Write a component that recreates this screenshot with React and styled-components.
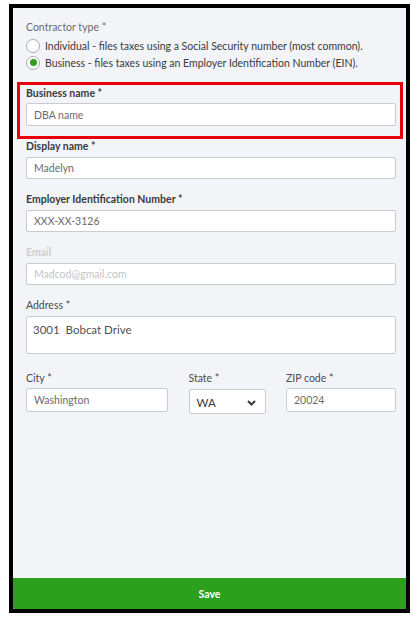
import React from "react";
import styled, { createGlobalStyle } from "styled-components";

const GlobalStyle = createGlobalStyle`
  html, body { margin: 0; padding: 0; background: #ffffff; }
  body { font-family: Lato, "Liberation Sans", Arial, sans-serif; }
  * { box-sizing: border-box; }
`;

const Frame = styled.div`
  margin: 4px 0 0 9px;
  width: 401px;
  height: 609px;
  border: 4px solid #000;
  background: #f3f4f8;
  display: flex;
  flex-direction: column;
`;

const Content = styled.div`
  flex: 1;
  padding: 12px 10px 0 13px;
  display: flex;
  flex-direction: column;
  border-bottom: 1px solid #fbfbfd;
`;

const GroupLabel = styled.div`
  font-size: 10.5px;
  line-height: 14px;
  color: #6b6c72;
  margin-bottom: 3px;
`;

const RadioGroup = styled.div`
  display: flex;
  flex-direction: column;
  margin-bottom: 11px;
`;

const RadioRow = styled.label`
  display: flex;
  align-items: center;
  gap: 5px;
  height: 17px;
  font-size: 10.5px;
  color: #393a3d;
`;

const RadioCircle = styled.span`
  width: 14px;
  height: 14px;
  border-radius: 50%;
  border: 1px solid #a9abb0;
  background: #fff;
  display: flex;
  align-items: center;
  justify-content: center;
  flex-shrink: 0;
  &::after {
    content: "";
    width: 7px;
    height: 7px;
    border-radius: 50%;
    background: ${(p) => (p.$checked ? "#2ca01c" : "transparent")};
  }
`;

const Field = styled.div`
  display: flex;
  flex-direction: column;
  margin-bottom: ${(p) => p.$gap ?? 13}px;
  min-width: 0;
`;

const HighlightField = styled(Field)`
  margin: 0 -7px 0 -9px;
  padding: 1px 4px 10px 6px;
  border: 3px solid #e8000b;
`;

const Label = styled.div`
  font-size: 10.5px;
  line-height: 14px;
  font-weight: ${(p) => (p.$strong ? 700 : 400)};
  color: ${(p) => (p.$muted ? "#cdced2" : p.$strong ? "#393a3d" : "#4a4b50")};
  margin-bottom: ${(p) => p.$space ?? 4}px;
  white-space: nowrap;
`;

const TextInput = styled.input`
  display: block;
  width: 100%;
  height: ${(p) => p.$h ?? 22}px;
  border: 1px solid #c9cbcf;
  border-radius: 2px;
  background: #fff;
  padding: 0 7px;
  font-family: inherit;
  font-size: 10.5px;
  color: ${(p) => (p.$muted ? "#c3c4c8" : "#6b6c72")};
  outline: none;
`;

const TextArea = styled.textarea`
  display: block;
  width: 100%;
  height: 38px;
  border: 1px solid #c9cbcf;
  border-radius: 2px;
  background: #fff;
  padding: 5px 6px;
  font-family: inherit;
  font-size: 11.5px;
  line-height: 15px;
  color: #4f5055;
  resize: none;
  outline: none;
`;

const AddressRow = styled.div`
  display: grid;
  grid-template-columns: 142px 77px 110px;
  column-gap: 20px;
  justify-content: space-between;
  align-items: start;
`;

const SelectBox = styled.div`
  height: 25px;
  margin-top: 1px;
  border: 1px solid #c9cbcf;
  border-radius: 2px;
  background: #fff;
  display: flex;
  align-items: center;
  justify-content: space-between;
  padding: 2px 9px 0 7px;
  font-size: 11.5px;
  color: #393a3d;
`;

const SaveBar = styled.button`
  height: 31px;
  border: none;
  background: #2ca01c;
  color: #fff;
  font-family: inherit;
  font-weight: 700;
  font-size: 10.5px;
  display: flex;
  align-items: center;
  justify-content: center;
  padding: 0;
  cursor: pointer;
`;

const Chevron = () => (
  <svg width="9" height="6" viewBox="0 0 9 6" aria-hidden="true">
    <polyline points="1,1 4.5,4.5 8,1" fill="none" stroke="#393a3d" strokeWidth="2" />
  </svg>
);

export default function App() {
  return (
    <>
      <GlobalStyle />
      <Frame>
        <Content>
          <GroupLabel>Contractor type *</GroupLabel>
          <RadioGroup>
            <RadioRow>
              <RadioCircle />
              Individual - files taxes using a Social Security number (most common).
            </RadioRow>
            <RadioRow>
              <RadioCircle $checked />
              Business - files taxes using an Employer Identification Number (EIN).
            </RadioRow>
          </RadioGroup>

          <HighlightField>
            <Label $strong $space={3}>Business name *</Label>
            <TextInput readOnly defaultValue="DBA name" $h={23} />
          </HighlightField>

          <Field>
            <Label $strong>Display name *</Label>
            <TextInput readOnly defaultValue="Madelyn" />
          </Field>

          <Field>
            <Label $strong>Employer Identification Number *</Label>
            <TextInput readOnly defaultValue="XXX-XX-3126" />
          </Field>

          <Field>
            <Label $strong $muted>Email</Label>
            <TextInput readOnly defaultValue="Madcod@gmail.com" $muted />
          </Field>

          <Field $gap={17}>
            <Label>Address *</Label>
            <TextArea readOnly defaultValue="3001  Bobcat Drive" />
          </Field>

          <AddressRow>
            <Field $gap={0}>
              <Label $space={3}>City *</Label>
              <TextInput readOnly defaultValue="Washington" $h={24} />
            </Field>
            <Field $gap={0}>
              <Label $space={3}>State *</Label>
              <SelectBox>
                WA
                <Chevron />
              </SelectBox>
            </Field>
            <Field $gap={0}>
              <Label $space={3}>ZIP code *</Label>
              <TextInput readOnly defaultValue="20024" $h={24} />
            </Field>
          </AddressRow>
        </Content>
        <SaveBar type="button">Save</SaveBar>
      </Frame>
    </>
  );
}
